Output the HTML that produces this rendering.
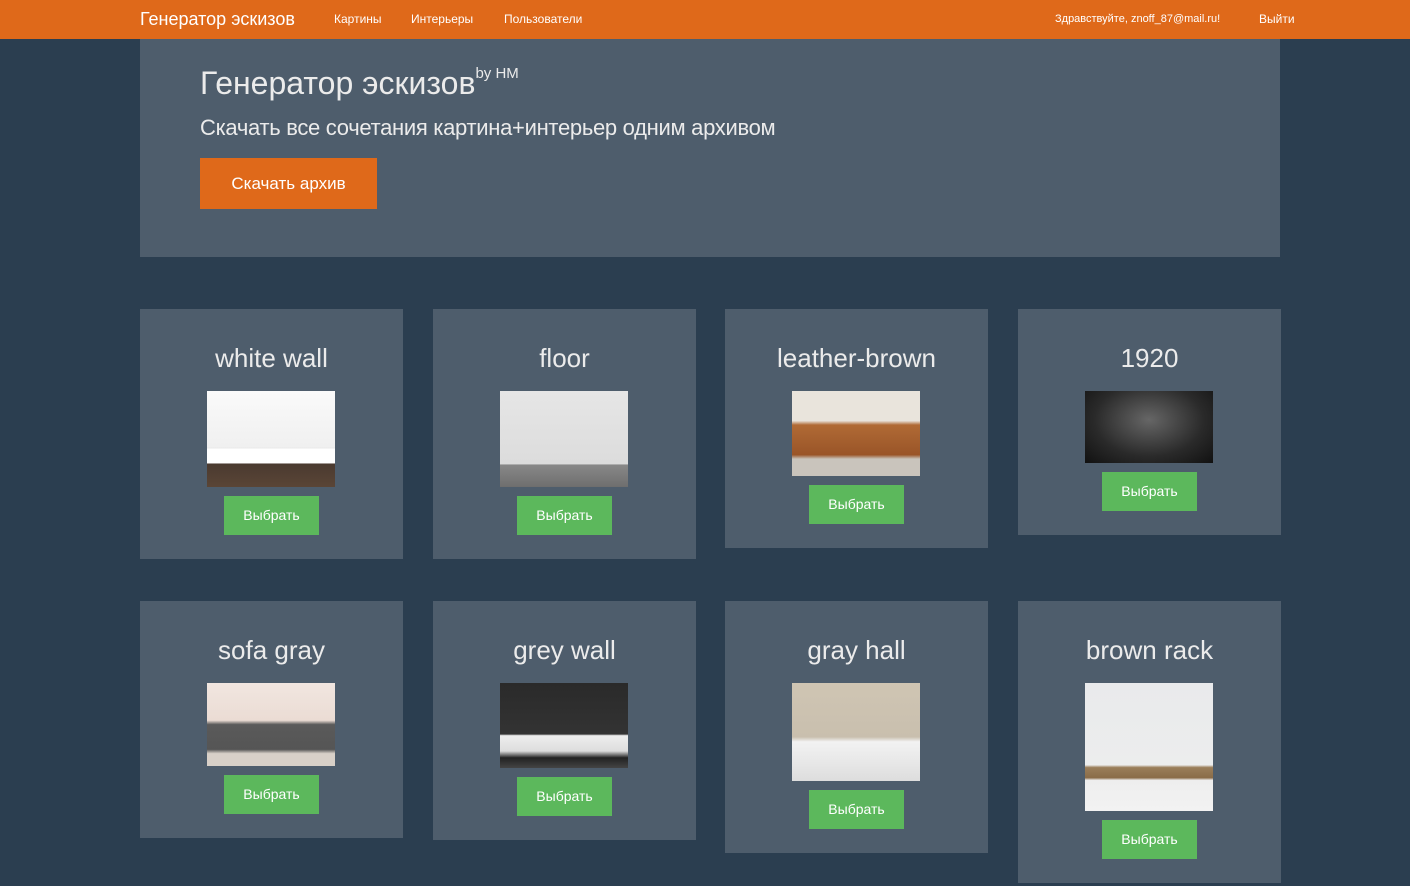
<!DOCTYPE html>
<html><head><meta charset="utf-8"><style>
*{margin:0;padding:0;box-sizing:border-box}
body{width:1410px;height:886px;background:#2b3e50;font-family:"Liberation Sans",sans-serif;position:relative;overflow:hidden;color:#ebebeb}
.nav{position:absolute;left:0;top:0;width:1410px;height:39px;background:#df691a;color:#fff}
.nav span{position:absolute;top:0;line-height:39px;font-size:12px}
.jum{position:absolute;left:140px;top:39px;width:1140px;height:218px;background:#4e5d6c}
.jum h1{position:absolute;left:60px;top:26px;font-size:32px;font-weight:normal;white-space:nowrap}
.jum h1 sup{font-size:15px;position:relative;top:1px;vertical-align:top;line-height:1}
.jum p{position:absolute;left:60px;top:76px;font-size:22px;letter-spacing:-0.3px}
.jum .b{position:absolute;left:60px;top:119px;width:177px;height:51px;background:#df691a;color:#fff;font-size:17px;text-align:center;line-height:51px}
.card{position:absolute;width:263px;background:#4e5d6c}
.card h3{position:absolute;left:0;width:100%;top:34px;text-align:center;font-family:"Liberation Sans",sans-serif;font-weight:normal;color:#ebebeb;font-size:26px;line-height:30px}
.img{position:absolute;left:67px;top:82px;width:128px}
.btn{position:absolute;left:84px;width:95px;height:39px;background:#5cb85c;color:#fff;font-size:14px;text-align:center;line-height:39px}
</style></head><body>
<div class="nav">
<span style="left:140px;font-size:18px">Генератор эскизов</span>
<span style="left:334px">Картины</span>
<span style="left:411px">Интерьеры</span>
<span style="left:504px">Пользователи</span>
<span style="left:1055px;font-size:11px">Здравствуйте, znoff_87@mail.ru!</span>
<span style="left:1259px">Выйти</span>
</div>
<div class="jum">
<h1>Генератор эскизов<sup>by HM</sup></h1>
<p>Скачать все сочетания картина+интерьер одним архивом</p>
<div class="b">Скачать архив</div>
</div>

<div class="card" style="left:140px;top:309px;height:250px"><h3>white wall</h3>
<div class="img" style="height:96px;background:linear-gradient(#fafafa 0,#f0f0f0 58%,#e8e8e8 60%,#fff 60%,#fff 75%,#4a3a30 76%,#5a4536 100%)"></div>
<div class="btn" style="top:187px">Выбрать</div></div>
<div class="card" style="left:433px;top:309px;height:250px"><h3>floor</h3>
<div class="img" style="height:96px;background:linear-gradient(#e6e6e6 0,#dcdcdc 76%,#888 77%,#6e6e6e 100%)"></div>
<div class="btn" style="top:187px">Выбрать</div></div>
<div class="card" style="left:725px;top:309px;height:239px"><h3>leather-brown</h3>
<div class="img" style="height:85px;background:linear-gradient(#e9e4dc 0,#e9e4dc 35%,#b06a35 40%,#9a5528 75%,#c9c4bc 80%,#c9c4bc 100%)"></div>
<div class="btn" style="top:176px">Выбрать</div></div>
<div class="card" style="left:1018px;top:309px;height:226px"><h3>1920</h3>
<div class="img" style="height:72px;background:radial-gradient(ellipse at 50% 40%,#666 0,#2a2a2a 60%,#111 100%)"></div>
<div class="btn" style="top:163px">Выбрать</div></div>

<div class="card" style="left:140px;top:601px;height:237px"><h3>sofa gray</h3>
<div class="img" style="height:83px;background:linear-gradient(#f1e6e0 0,#ebdcd4 45%,#5a5a5a 50%,#555 80%,#d8d0c8 85%,#d8d0c8 100%)"></div>
<div class="btn" style="top:174px">Выбрать</div></div>
<div class="card" style="left:433px;top:601px;height:239px"><h3>grey wall</h3>
<div class="img" style="height:85px;background:linear-gradient(#2a2a2a 0,#333 60%,#eee 62%,#ddd 80%,#222 88%,#444 100%)"></div>
<div class="btn" style="top:176px">Выбрать</div></div>
<div class="card" style="left:725px;top:601px;height:252px"><h3>gray hall</h3>
<div class="img" style="height:98px;background:linear-gradient(#cfc5b3 0,#c9bfae 55%,#f2f2f2 60%,#e8e8e8 80%,#ddd 100%)"></div>
<div class="btn" style="top:189px">Выбрать</div></div>
<div class="card" style="left:1018px;top:601px;height:282px"><h3>brown rack</h3>
<div class="img" style="height:128px;background:linear-gradient(#e9eaec 0,#eceded 64%,#9a7e5a 66%,#8a6c48 74%,#eee 76%,#f2f2f2 100%)"></div>
<div class="btn" style="top:219px">Выбрать</div></div>
</body></html>
